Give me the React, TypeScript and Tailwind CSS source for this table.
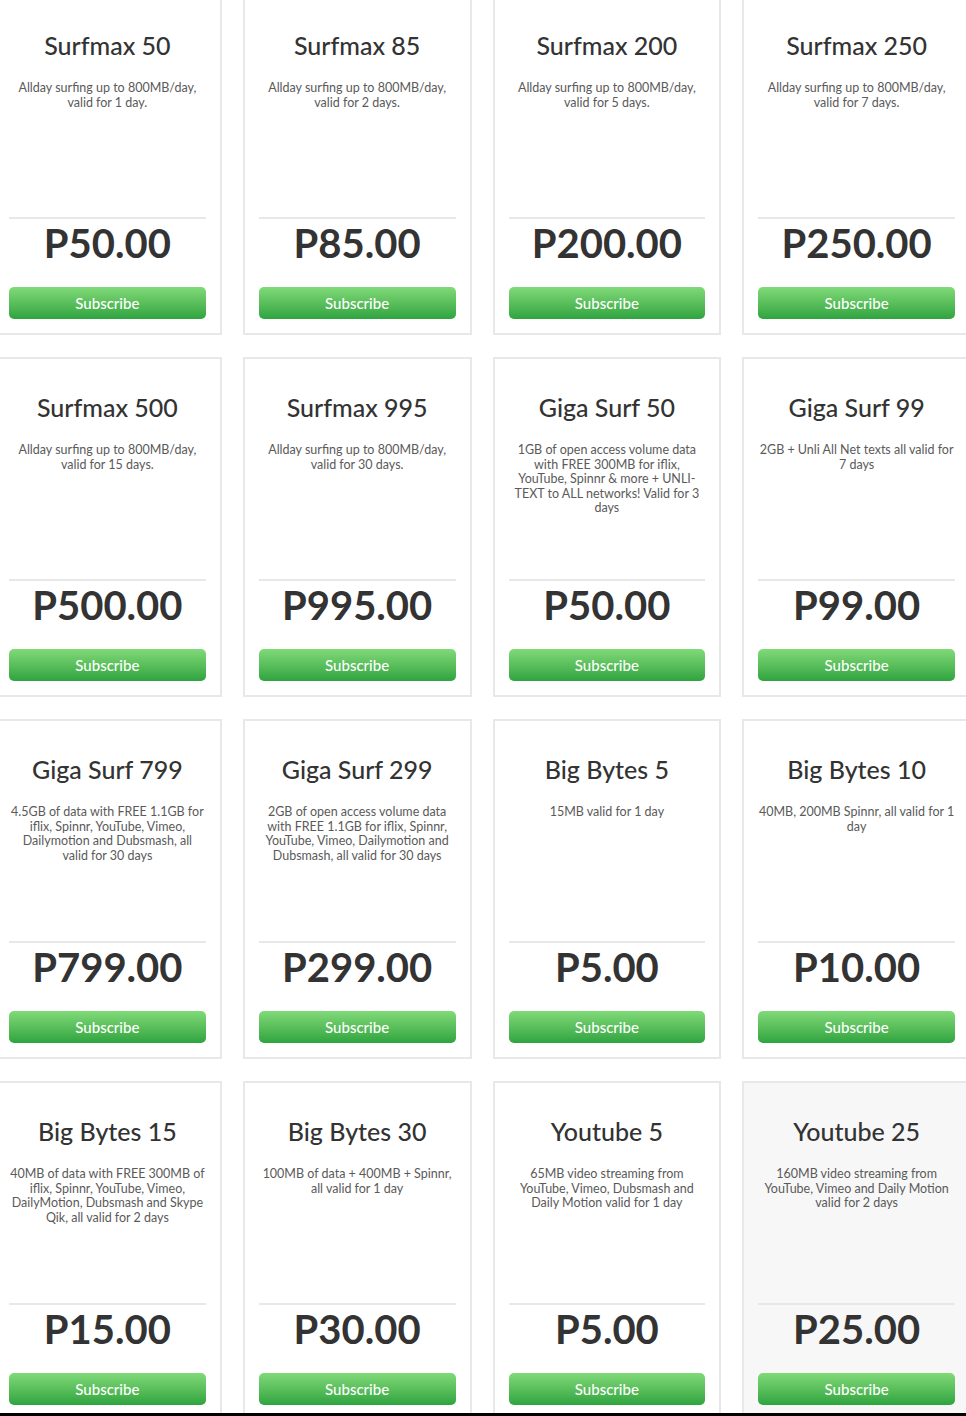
import React from "react";

type Plan = { name: string; desc: string; price: string; hover?: boolean };

const plans: Plan[] = [
  { name: "Surfmax 50", desc: "Allday surfing up to 800MB/day, valid for 1 day.", price: "P50.00" },
  { name: "Surfmax 85", desc: "Allday surfing up to 800MB/day, valid for 2 days.", price: "P85.00" },
  { name: "Surfmax 200", desc: "Allday surfing up to 800MB/day, valid for 5 days.", price: "P200.00" },
  { name: "Surfmax 250", desc: "Allday surfing up to 800MB/day, valid for 7 days.", price: "P250.00" },
  { name: "Surfmax 500", desc: "Allday surfing up to 800MB/day, valid for 15 days.", price: "P500.00" },
  { name: "Surfmax 995", desc: "Allday surfing up to 800MB/day, valid for 30 days.", price: "P995.00" },
  { name: "Giga Surf 50", desc: "1GB of open access volume data with FREE 300MB for iflix, YouTube, Spinnr & more + UNLI-TEXT to ALL networks! Valid for 3 days", price: "P50.00" },
  { name: "Giga Surf 99", desc: "2GB + Unli All Net texts all valid for 7 days", price: "P99.00" },
  { name: "Giga Surf 799", desc: "4.5GB of data with FREE 1.1GB for iflix, Spinnr, YouTube, Vimeo, Dailymotion and Dubsmash, all valid for 30 days", price: "P799.00" },
  { name: "Giga Surf 299", desc: "2GB of open access volume data with FREE 1.1GB for iflix, Spinnr, YouTube, Vimeo, Dailymotion and Dubsmash, all valid for 30 days", price: "P299.00" },
  { name: "Big Bytes 5", desc: "15MB valid for 1 day", price: "P5.00" },
  { name: "Big Bytes 10", desc: "40MB, 200MB Spinnr, all valid for 1 day", price: "P10.00" },
  { name: "Big Bytes 15", desc: "40MB of data with FREE 300MB of iflix, Spinnr, YouTube, Vimeo, DailyMotion, Dubsmash and Skype Qik, all valid for 2 days", price: "P15.00" },
  { name: "Big Bytes 30", desc: "100MB of data + 400MB + Spinnr, all valid for 1 day", price: "P30.00" },
  { name: "Youtube 5", desc: "65MB video streaming from YouTube, Vimeo, Dubsmash and Daily Motion valid for 1 day", price: "P5.00" },
  { name: "Youtube 25", desc: "160MB video streaming from YouTube, Vimeo and Daily Motion valid for 2 days", price: "P25.00", hover: true },
];

function Card({ p }: { p: Plan }) {
  return (
    <div
      className={`flex h-[340px] flex-col border-2 border-[#e8e8e8] px-[14px] pb-[14px] pt-[33px] ${
        p.hover ? "bg-[#f7f7f7]" : "bg-white"
      }`}
    >
      <div className="text-center text-[25px] font-medium leading-[30px] text-[#333]">{p.name}</div>
      <div className="mt-[21px] flex-1 text-center text-[12.5px] leading-[14.5px] text-[#5a5a5a]">
        {p.desc}
      </div>
      <div className="h-[2px] bg-[#e8e8e8]" />
      <div className="text-center text-[40px] font-bold leading-[48px] text-[#333]">{p.price}</div>
      <button className="mt-[20px] h-[32px] w-full rounded-[5px] bg-gradient-to-b from-[#80da78] to-[#2ca43f] pt-[1px] text-[15px] font-medium text-white">
        Subscribe
      </button>
    </div>
  );
}

export default function App() {
  return (
    <div
      className="flex h-[1416px] w-[966px] flex-col overflow-hidden bg-white"
      style={{ fontFamily: "Lato, 'Noto Sans', sans-serif" }}
    >
      <div className="h-[1413px] overflow-hidden">
        <div className="ml-[-7px] mt-[-5px] grid w-[978px] grid-cols-4 gap-x-[21px] gap-y-[22px]">
          {plans.map((p) => (
            <Card key={p.name} p={p} />
          ))}
        </div>
      </div>
      <div className="h-[3px] bg-black" />
    </div>
  );
}
